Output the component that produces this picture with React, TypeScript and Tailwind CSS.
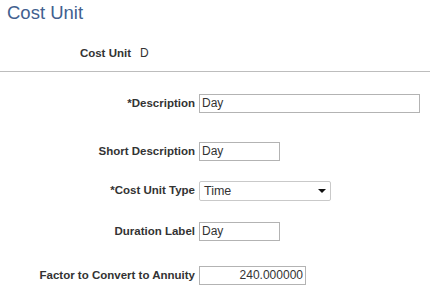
import React from "react";

const font = { fontFamily: '"Liberation Sans", Arial, sans-serif' };

function Label({ children }: { children: React.ReactNode }) {
  return (
    <div className="w-[199px] shrink-0 pr-[4px] text-right text-[11.5px] font-bold text-[#333333]">
      {children}
    </div>
  );
}

function TextBox({ value, w, right }: { value: string; w: string; right?: boolean }) {
  return (
    <div
      className={`${w} h-[19px] border border-[#b3b3b3] bg-white px-[2px] text-[12px] leading-[17px] text-[#333333] ${
        right ? "text-right" : ""
      }`}
    >
      {value}
    </div>
  );
}

export default function App() {
  return (
    <div className="h-[293px] w-[430px] overflow-hidden bg-white" style={font}>
      <div className="pl-[7px] pt-[1px] text-[18.5px] leading-[24px] text-[#41608f]">Cost Unit</div>
      <div className="mt-[21px] flex items-center text-[11.5px] leading-[14px]">
        <div className="w-[131px] text-right font-bold text-[#333333]">Cost Unit</div>
        <div className="pl-[9px] text-[#333333] text-[12px]">D</div>
      </div>
      <div className="mt-[11px] h-px w-full bg-[#bdbdbd]" />
      <div className="flex flex-col">
        <div className="mt-[22px] flex items-center">
          <Label>*Description</Label>
          <TextBox value="Day" w="w-[221px]" />
        </div>
        <div className="mt-[29px] flex items-center">
          <Label>Short Description</Label>
          <TextBox value="Day" w="w-[81px]" />
        </div>
        <div className="mt-[20px] flex items-center">
          <Label>*Cost Unit Type</Label>
          <div className="flex h-[20px] w-[132px] items-center justify-between rounded-[2px] border border-[#c9c9c9] bg-white pl-[4px] pr-[4px] text-[12.5px] text-[#333333]">
            <span>Time</span>
            <svg width="8" height="4" viewBox="0 0 8 4">
              <path d="M0 0 L8 0 L4 4 Z" fill="#111" />
            </svg>
          </div>
        </div>
        <div className="mt-[21px] flex items-center">
          <Label>Duration Label</Label>
          <TextBox value="Day" w="w-[81px]" />
        </div>
        <div className="mt-[25px] flex items-center">
          <Label>Factor to Convert to Annuity</Label>
          <TextBox value="240.000000" w="w-[107px]" right />
        </div>
      </div>
    </div>
  );
}
